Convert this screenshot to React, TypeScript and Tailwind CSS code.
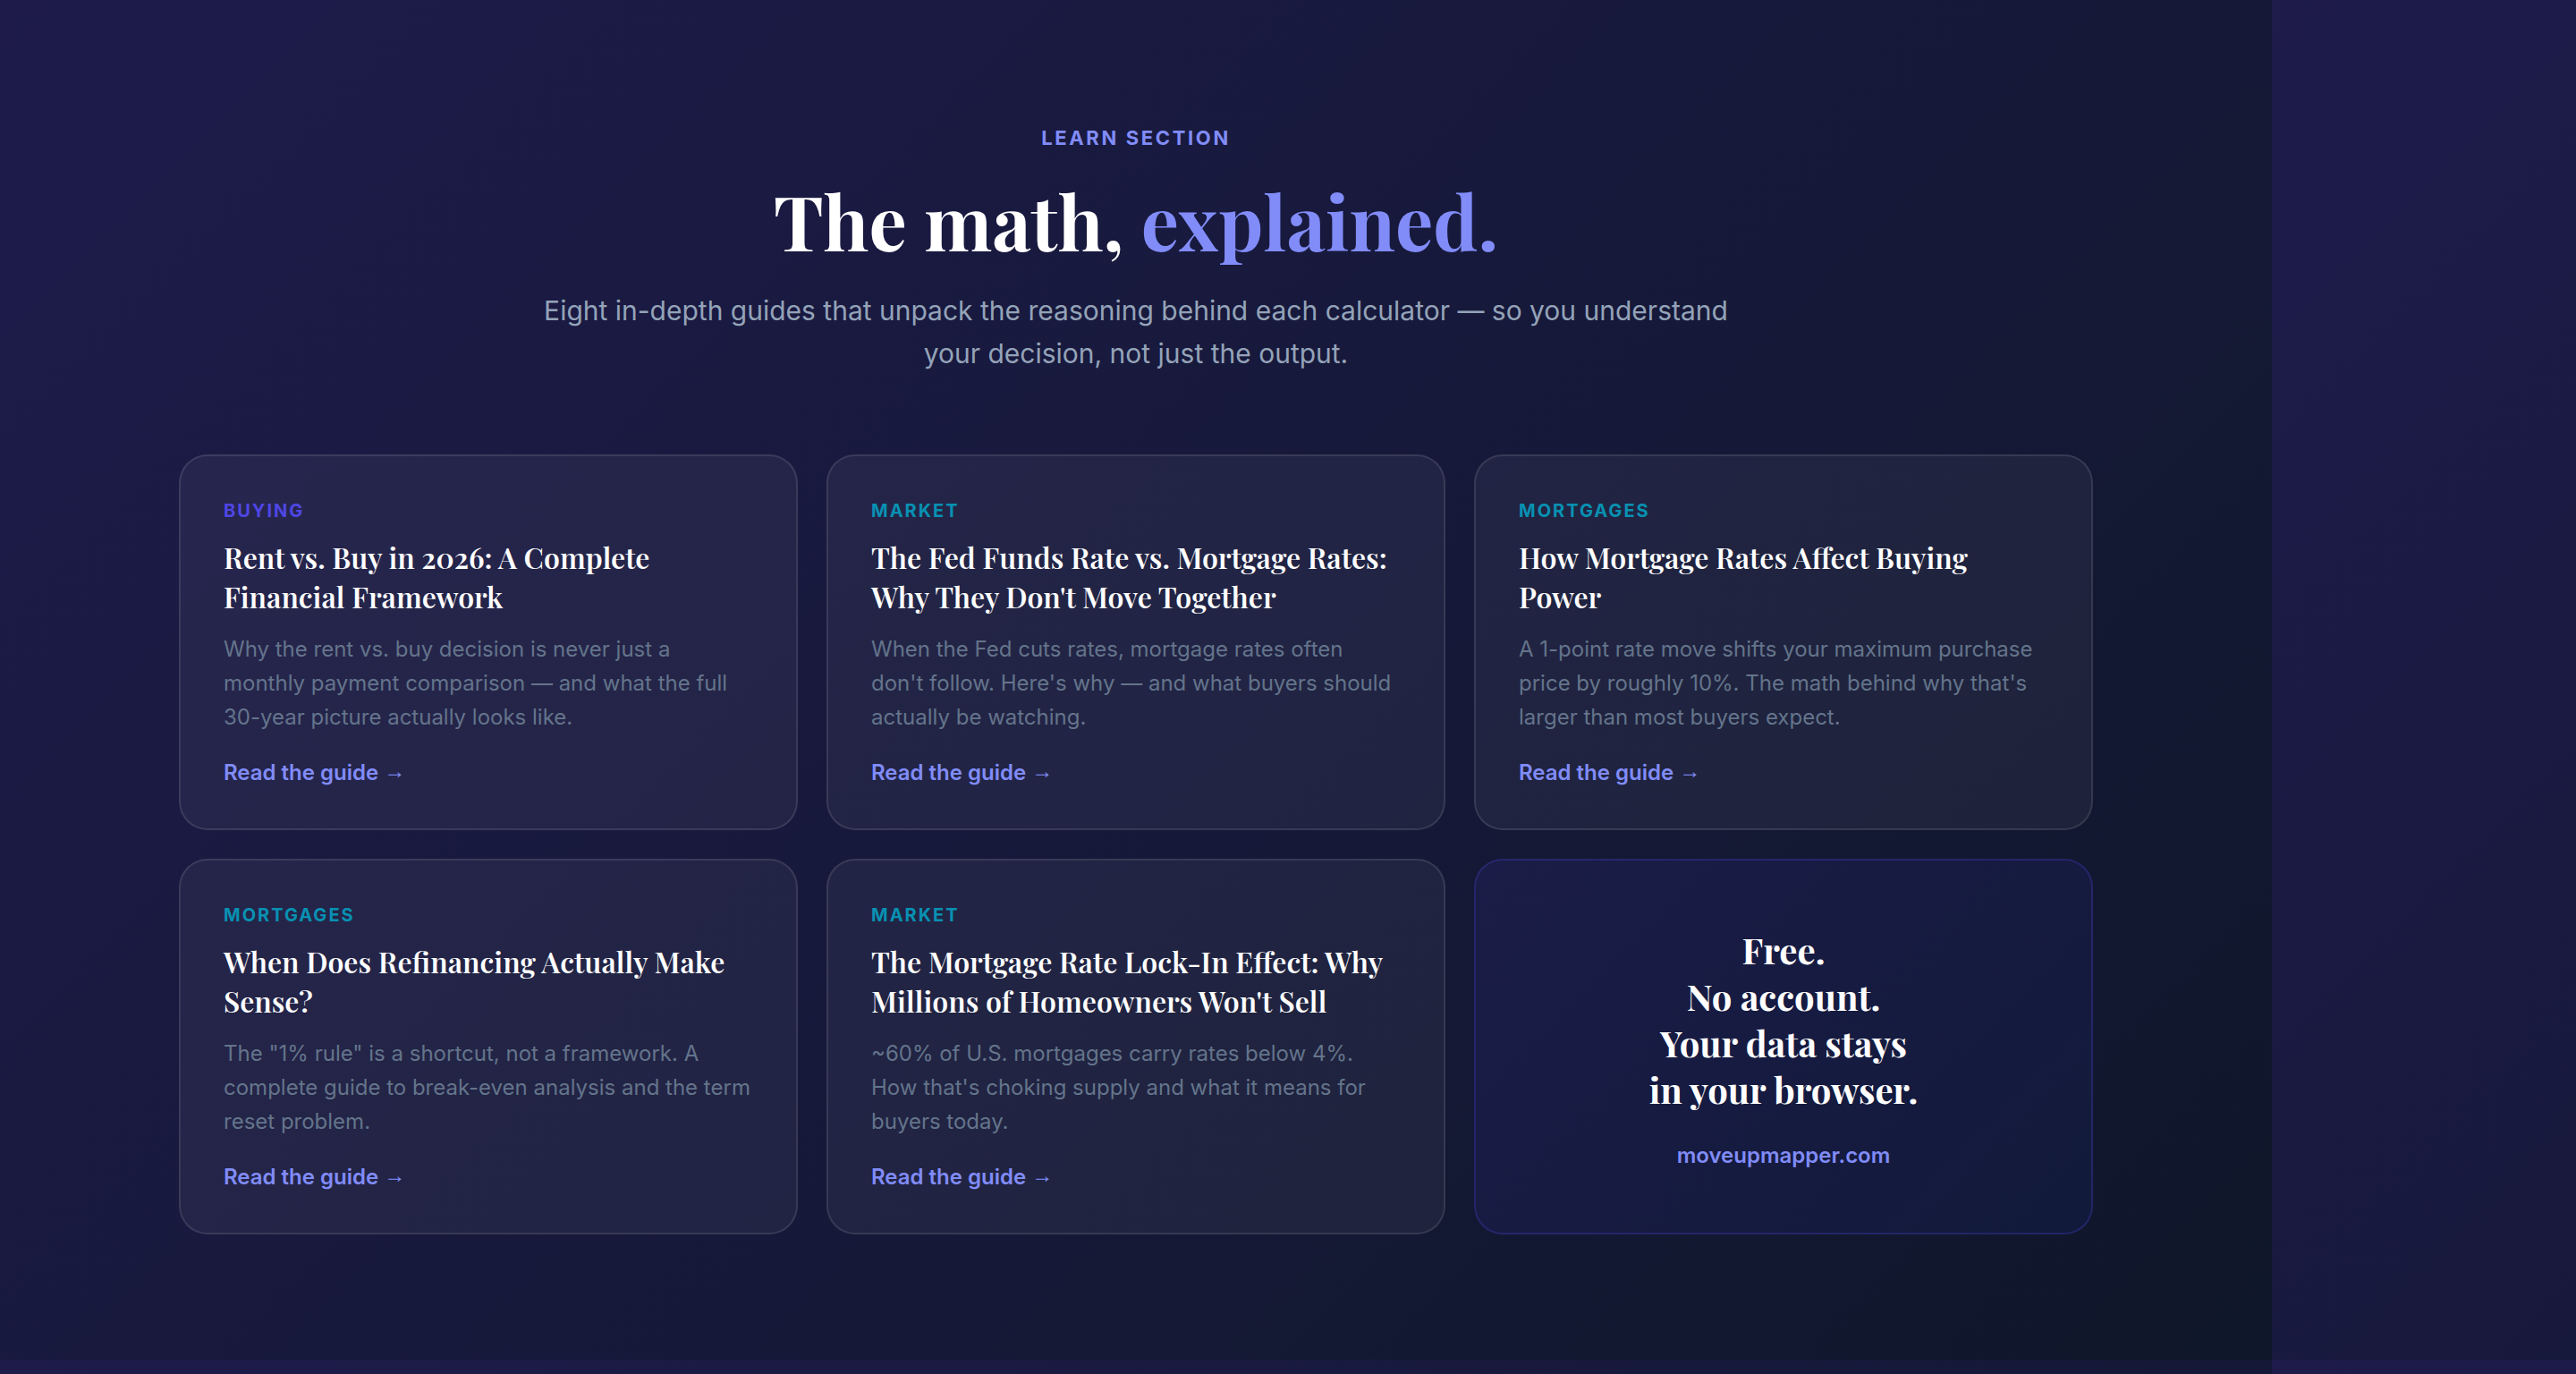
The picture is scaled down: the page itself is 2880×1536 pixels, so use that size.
const serif = "font-['Playfair_Display','Liberation_Serif',serif]";

type Guide = {
  category: string;
  categoryColor: string;
  title: string;
  text: string;
};

const guides: Guide[] = [
  {
    category: "Buying",
    categoryColor: "text-[#4f46e5]",
    title: "Rent vs. Buy in 2026: A Complete Financial Framework",
    text: "Why the rent vs. buy decision is never just a monthly payment comparison — and what the full 30-year picture actually looks like.",
  },
  {
    category: "Market",
    categoryColor: "text-[#0891b2]",
    title: "The Fed Funds Rate vs. Mortgage Rates: Why They Don't Move Together",
    text: "When the Fed cuts rates, mortgage rates often don't follow. Here's why — and what buyers should actually be watching.",
  },
  {
    category: "Mortgages",
    categoryColor: "text-[#0891b2]",
    title: "How Mortgage Rates Affect Buying Power",
    text: "A 1-point rate move shifts your maximum purchase price by roughly 10%. The math behind why that's larger than most buyers expect.",
  },
  {
    category: "Mortgages",
    categoryColor: "text-[#0891b2]",
    title: "When Does Refinancing Actually Make Sense?",
    text: 'The "1% rule" is a shortcut, not a framework. A complete guide to break-even analysis and the term reset problem.',
  },
  {
    category: "Market",
    categoryColor: "text-[#0891b2]",
    title: "The Mortgage Rate Lock-In Effect: Why Millions of Homeowners Won't Sell",
    text: "~60% of U.S. mortgages carry rates below 4%. How that's choking supply and what it means for buyers today.",
  },
];

function GuideCard({ guide }: { guide: Guide }) {
  return (
    <article className="flex flex-col items-start rounded-[32px] border-2 border-white/10 bg-white/5 p-12">
      <p className={`text-[20px] leading-[26px] font-bold tracking-[2px] uppercase ${guide.categoryColor}`}>
        {guide.category}
      </p>
      <h2 className={`mt-[17px] text-[32px] leading-11 font-semibold text-white ${serif}`}>{guide.title}</h2>
      <p className="mt-[18px] text-[24px] leading-[38px] text-[#64748b]">{guide.text}</p>
      <a href="#guide" className="mt-[29px] text-[24px] leading-7 font-semibold text-[#818cf8]">
        Read the guide <span className="align-[2px] font-['Liberation_Sans',sans-serif] leading-none">→</span>
      </a>
    </article>
  );
}

function PromoCard() {
  return (
    <aside className="flex flex-col items-center justify-center rounded-[32px] border-2 border-[#4f46e5]/25 bg-linear-135 from-[#4f46e5]/10 to-[#2f3ce5]/8 px-12 pt-[50px] pb-[46px] text-center">
      <p className={`text-[40px] leading-[52px] font-bold text-white ${serif}`}>
        Free.
        <br />
        No account.
        <br />
        Your data stays
        <br />
        in your browser.
      </p>
      <a href="https://moveupmapper.com" className="mt-8 text-[24px] leading-8 font-semibold text-[#818cf8]">
        moveupmapper.com
      </a>
    </aside>
  );
}

export default function App() {
  return (
    <div className="min-h-screen bg-[linear-gradient(135deg,#1e1b4b,#0f172a)] bg-[length:calc(100%-340px)_calc(100%-16px)] pr-[340px] font-['Inter',sans-serif]">
      <main className="px-[200px] py-[140px]">
        <header className="flex flex-col items-center text-center">
          <p className="text-[22px] leading-7 font-bold tracking-[0.12em] text-[#818cf8] uppercase">Learn section</p>
          <h1 className={`mt-[30px] text-[84px] leading-24 font-bold text-white ${serif}`}>
            The math, <span className="text-[#818cf8]">explained.</span>
          </h1>
          <p className="mt-[29px] max-w-[1360px] text-[30px] leading-12 text-[#94a3b8]">
            Eight in-depth guides that unpack the reasoning behind each calculator — so you understand your decision,
            not just the output.
          </p>
        </header>
        <section className="mt-[89px] grid grid-cols-3 gap-8">
          {guides.map((guide) => (
            <GuideCard key={guide.title} guide={guide} />
          ))}
          <PromoCard />
        </section>
      </main>
    </div>
  );
}
